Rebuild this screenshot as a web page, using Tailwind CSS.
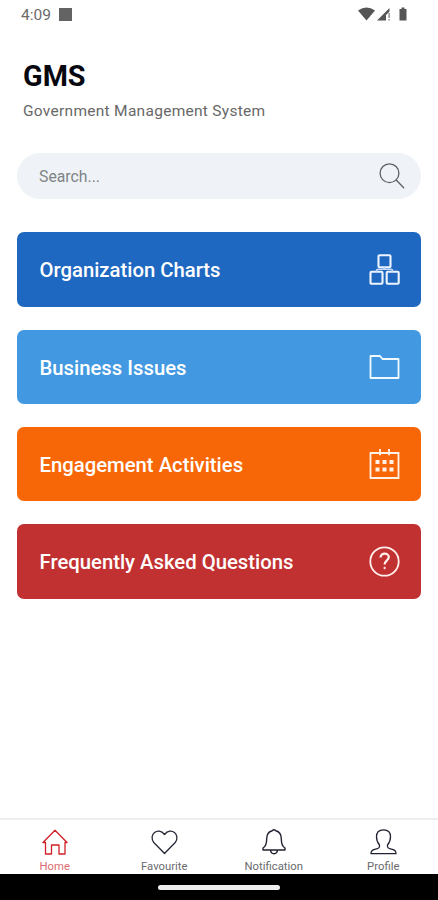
<!DOCTYPE html>
<html lang="en">
<head>
<meta charset="utf-8">
<title>GMS</title>
<script src="https://cdn.jsdelivr.net/npm/@tailwindcss/browser@4"></script>
</head>
<body class="bg-white">
<div class="flex h-[900px] w-[438px] flex-col overflow-hidden bg-white font-[Roboto,sans-serif]">
  <header class="flex h-7 shrink-0 items-center pl-[21px] pr-[30px] text-[#6b6b6b]">
    <span class="pt-px text-[15.5px] leading-7">4:09</span>
    <span class="ml-2 size-[13px] bg-[#636363]"></span>
    <svg class="ml-auto h-[14px] w-[50px]" viewBox="0 0 50 14" fill="#555">
      <path d="M0 3.6Q8.500-2.800 17 3.600L8.500 13.500Z"/>
      <path d="M19 13.500 31.500 1V4.500L28 8V13.500Z"/>
      <path d="M30.500 6h1.200v5h-1.200zM30.500 12h1.200v1.500h-1.200z" fill="#777"/>
      <path d="M41.500 2h2V.5h3V2h2v11.500h-7V2z"/>
    </svg>
  </header>

  <main class="flex flex-1 flex-col px-[17px]">
    <h1 class="mt-[31px] pl-[6px] text-[28.800px] font-bold leading-[34px] text-[#080810]">GMS</h1>
    <p class="mt-2 pl-[6px] text-[15.500px] leading-5 tracking-[0.280px] text-[#686868]">Government Management System</p>

    <label class="mt-8 flex h-[46px] items-center justify-between rounded-full bg-[#eff3f7] pl-[22px] pr-4 text-[#808386]">
      <span class="pt-px text-[15.800px] leading-6">Search...</span>
      <svg class="size-[26px]" viewBox="0 0 26 26" fill="none" stroke="#5c5f63" stroke-width="1.3" stroke-linecap="round"><circle cx="10.500" cy="10.200" r="9.400"/><path d="m17.200 17 7.500 7.800"/></svg>
    </label>

    <nav class="mt-[33.400px] flex flex-col gap-[23px] text-[20.300px] font-medium text-white">
      <a class="flex h-[74.300px] items-center justify-between rounded-[7px] bg-[#1f68c1] pl-[22.500px] pr-[21px]">
        <span class="pt-[2px]">Organization Charts</span>
        <svg class="size-[31px]" viewBox="0 0 31 31" fill="none" stroke="#edf3ff" stroke-width="2.100"><rect x="9.500" y="1.300" width="12" height="12" rx="1"/><rect x="1.500" y="17.700" width="12" height="12" rx="1"/><rect x="17.700" y="17.700" width="12" height="12" rx="1"/><path d="M15.500 13v2M7.500 18v-1.200q0-1.600 2-1.600h12q2 0 2 1.600V18" stroke-width="1.500" stroke="#c5d9f7"/></svg>
      </a>
      <a class="flex h-[74.300px] items-center justify-between rounded-[7px] bg-[#4299e1] pl-[22.500px] pr-[21px]">
        <span class="pt-[2px]">Business Issues</span>
        <svg class="size-[31px]" viewBox="0 0 31 31" fill="none" stroke="#f1fbff" stroke-width="1.800" stroke-linejoin="round"><path d="M1.500 5h9.500l2.500 3h16v19h-28z"/></svg>
      </a>
      <a class="flex h-[74.300px] items-center justify-between rounded-[7px] bg-[#f76707] pl-[22.500px] pr-[21px]">
        <span class="pt-[2px]">Engagement Activities</span>
        <svg class="size-[31px]" viewBox="0 0 31 31" fill="none" stroke="#fff1e5" stroke-width="1.800"><path d="M1.500 4h28v25h-28zM11 0v6.200M20 0v6.200"/><path d="M6.500 13h4m3 0h4m3 0h4m-18 7.500h4m3 0h4m3 0h4" stroke-width="3.800"/></svg>
      </a>
      <a class="flex h-[74.300px] items-center justify-between rounded-[7px] bg-[#c23131] pl-[22.500px] pr-[21px]">
        <span class="pt-[2px]">Frequently Asked Questions</span>
        <svg class="size-[31px]" viewBox="0 0 31 31" fill="none" stroke="#fff0ed" stroke-width="1.800"><circle cx="15.500" cy="15.500" r="14.200"/><path d="M11.500 11.500c0-5.300 8.300-4.800 8.300-.4 0 3.600-4.200 3.600-4.200 7.400" stroke-width="2.200"/><circle cx="15.600" cy="22" r=".8" fill="#fff0ed" stroke-width="1"/></svg>
      </a>
    </nav>
  </main>

  <nav class="grid h-[56px] shrink-0 grid-cols-4 border-t-2 border-[#eeeeee] text-[11.300px] leading-3 text-[#6a6a6e]">
    <a class="flex flex-col items-center pt-[9px] text-[#dc6c70]">
      <svg class="h-[27px] w-[28px]" viewBox="0 0 28 27" fill="none" stroke="#cf2027" stroke-width="1.300" stroke-linejoin="round"><path d="M2 13.500 14 1.200l12 12.300h-2V25h-6V16h-7.500v9h-6V13.500z"/></svg>
      <span class="mt-[5px]">Home</span>
    </a>
    <a class="flex flex-col items-center pt-[9px]">
      <svg class="h-[27px] w-[28px]" viewBox="0 0 28 27" fill="none" stroke="#252735" stroke-width="1.300" stroke-linejoin="round"><path d="M14.500 24.500 3.800 13.500C-2 6 8-3 14.500 5.500 21-3 31 6 25.200 13.500z"/></svg>
      <span class="mt-[5px]">Favourite</span>
    </a>
    <a class="flex flex-col items-center pt-[9px]">
      <svg class="h-[27px] w-[28px]" viewBox="0 0 28 27" fill="none" stroke="#202231" stroke-width="1.400" stroke-linejoin="round"><path d="M12.200 1.700q1.800-1.700 3.600 0c4 1 5.500 4.300 5.500 8 0 5.500.700 7.600 3.700 9.300V21H3v-2c3-1.700 3.700-3.800 3.700-9.300 0-3.700 1.500-7 5.500-8zM10.500 21c.5 5 6.500 5 7 0"/></svg>
      <span class="mt-[5px]">Notification</span>
    </a>
    <a class="flex flex-col items-center pt-[9px]">
      <svg class="h-[27px] w-[28px]" viewBox="0 0 28 27" fill="none" stroke="#202231" stroke-width="1.300" stroke-linejoin="round"><path d="M14.500 .8c-5 0-7 3-7 7 0 4 1.300 6.300 3 8.200.5 3-1.200 3.400-4 4.200-3.500 1-4.500 1.500-4.500 4.500h25c0-3-1-3.500-4.500-4.500-2.800-.8-4.500-1.200-4-4.200 1.700-1.900 3-4.200 3-8.200 0-4-2-7-7-7z"/></svg>
      <span class="mt-[5px]">Profile</span>
    </a>
  </nav>
  <footer class="flex h-[26px] shrink-0 justify-center bg-black pt-[10.500px]">
    <span class="h-[5px] w-[122px] rounded-full bg-[#eeeeee]"></span>
  </footer>
</div>
</body>
</html>
